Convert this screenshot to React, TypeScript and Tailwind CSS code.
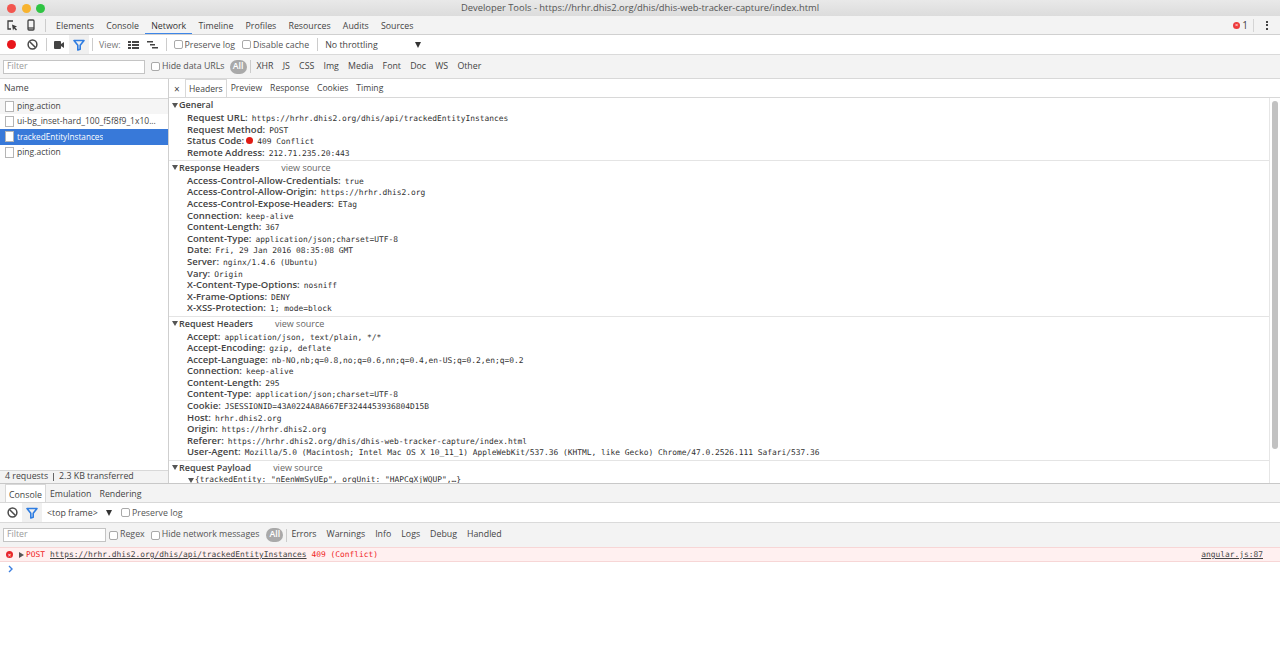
import React from 'react';

const sans = 'font-["Open_Sans","Noto_Sans",sans-serif]';
const mono = 'font-["DejaVu_Sans_Mono","Liberation_Mono",monospace]';

const general: [string, string][] = [
  ['Request URL:', 'https://hrhr.dhis2.org/dhis/api/trackedEntityInstances'],
  ['Request Method:', 'POST'],
  ['Status Code:', '409 Conflict'],
  ['Remote Address:', '212.71.235.20:443'],
];

const responseHeaders: [string, string][] = [
  ['Access-Control-Allow-Credentials:', 'true'],
  ['Access-Control-Allow-Origin:', 'https://hrhr.dhis2.org'],
  ['Access-Control-Expose-Headers:', 'ETag'],
  ['Connection:', 'keep-alive'],
  ['Content-Length:', '367'],
  ['Content-Type:', 'application/json;charset=UTF-8'],
  ['Date:', 'Fri, 29 Jan 2016 08:35:08 GMT'],
  ['Server:', 'nginx/1.4.6 (Ubuntu)'],
  ['Vary:', 'Origin'],
  ['X-Content-Type-Options:', 'nosniff'],
  ['X-Frame-Options:', 'DENY'],
  ['X-XSS-Protection:', '1; mode=block'],
];

const requestHeaders: [string, string][] = [
  ['Accept:', 'application/json, text/plain, */*'],
  ['Accept-Encoding:', 'gzip, deflate'],
  ['Accept-Language:', 'nb-NO,nb;q=0.8,no;q=0.6,nn;q=0.4,en-US;q=0.2,en;q=0.2'],
  ['Connection:', 'keep-alive'],
  ['Content-Length:', '295'],
  ['Content-Type:', 'application/json;charset=UTF-8'],
  ['Cookie:', 'JSESSIONID=43A0224A8A667EF3244453936804D15B'],
  ['Host:', 'hrhr.dhis2.org'],
  ['Origin:', 'https://hrhr.dhis2.org'],
  ['Referer:', 'https://hrhr.dhis2.org/dhis/dhis-web-tracker-capture/index.html'],
  ['User-Agent:', 'Mozilla/5.0 (Macintosh; Intel Mac OS X 10_11_1) AppleWebKit/537.36 (KHTML, like Gecko) Chrome/47.0.2526.111 Safari/537.36'],
];

function Filter({ color = '#2f7de1' }: { color?: string }) {
  return (
    <svg width="12" height="12" viewBox="0 0 12 12" fill="none" stroke={color} strokeWidth="1.6">
      <path d="M1 1.5h10L7.2 6.2v4L4.8 11V6.2z" strokeLinejoin="round" />
    </svg>
  );
}

function Clear() {
  return (
    <svg width="11" height="11" viewBox="0 0 11 11" fill="none" stroke="#4a4a4a" strokeWidth="1.5">
      <circle cx="5.5" cy="5.5" r="4.4" />
      <path d="M2.5 2.5l6 6" />
    </svg>
  );
}

function Check({ label, className = '', labelClass = '' }: { label: string; className?: string; labelClass?: string }) {
  return (
    <span className={`flex items-center gap-[2px] text-[#555] ${className}`}>
      <span className="h-[9px] w-[9px] rounded-[2px] border border-[#a9a9a9] bg-white" />
      <span className={labelClass}>{label}</span>
    </span>
  );
}

function Caret() {
  return <span className="mr-[1px] h-0 w-0 border-x-[3px] border-t-[5px] border-x-transparent border-t-[#555]" />;
}

function Row({ name, value, dot }: { name: string; value: string; dot?: boolean }) {
  return (
    <div className="flex h-[11.6px] items-baseline whitespace-nowrap pl-[18px] text-[9.5px] leading-[11.6px]">
      <span className="font-semibold text-[#444]">{name}</span>
      {dot && <span className="ml-[2px] h-[7px] w-[7px] self-center rounded-full bg-[#e01b14]" />}
      <span className={`${mono} ml-[4px] text-[7.9px] text-[#303030]`}>{value}</span>
    </div>
  );
}

function Section({ title, source, rows, last }: { title: string; source?: boolean; rows: [string, string][]; last?: boolean }) {
  return (
    <section className={last ? '' : 'border-b border-[#e4e4e4] pb-[1.5px]'}>
      <div className="flex h-[14px] items-center pl-[3px] text-[9px] font-semibold text-[#444]">
        <Caret />
        {title}
        {source && <span className="ml-[22px] font-normal text-[#666]">view source</span>}
      </div>
      {rows.map((r, i) => (
        <Row key={i} name={r[0]} value={r[1]} dot={r[0] === 'Status Code:'} />
      ))}
    </section>
  );
}

function Request({ name, selected, shaded }: { name: string; selected?: boolean; shaded?: boolean }) {
  return (
    <div className={`flex h-[15.2px] items-center gap-[2px] pl-[5px] ${selected ? 'bg-[#3879d9] text-[8.2px] font-medium text-white' : shaded ? 'bg-[#f5f5f5] text-[8.5px] text-[#444]' : 'text-[8.5px] text-[#444]'}`}>
      <span className="h-[11px] w-[9px] border border-[#b5b5b5] bg-white" />
      <span className="ml-[1px] truncate">{name}</span>
    </div>
  );
}

export default function App() {
  return (
    <div className={`${sans} flex h-[656px] w-[1280px] flex-col overflow-hidden bg-white text-[8.8px] text-[#444]`}>
      {/* window title */}
      <div className="relative flex h-[16px] shrink-0 items-center justify-center bg-gradient-to-b from-[#e9e9e9] to-[#dcdcdc] text-[9.4px] text-[#555]">
        <div className="absolute left-[7px] top-[4px] flex gap-[5.5px]">
          <span className="h-[9px] w-[9px] rounded-full bg-[#f2564f]" />
          <span className="h-[9px] w-[9px] rounded-full bg-[#f7b32f]" />
          <span className="h-[9px] w-[9px] rounded-full bg-[#2fc443]" />
        </div>
        Developer Tools - https://hrhr.dhis2.org/dhis/dhis-web-tracker-capture/index.html
      </div>

      {/* panel tabs */}
      <div className="flex h-[19px] shrink-0 items-center border-b border-[#d0d0d0] bg-[#f3f3f3]">
        <svg className="ml-[7px]" width="11" height="11" viewBox="0 0 11 11" fill="none" stroke="#3c3c3c" strokeWidth="1.3">
          <path d="M6 1H1v8h3" />
          <path d="M5 4.5l5 2-2 1 2 2-1 1-2-2-1 2z" fill="#3c3c3c" stroke="none" />
        </svg>
        <svg className="ml-[9px]" width="8" height="12" viewBox="0 0 8 12" fill="none" stroke="#444" strokeWidth="1.3">
          <rect x="1" y="1" width="6" height="10" rx="1" />
          <path d="M1 9h6" />
        </svg>
        <span className="ml-[10px] mr-[4px] h-[13px] w-px bg-[#ccc]" />
        <div className="flex h-full items-center">
          {['Elements', 'Console', 'Network', 'Timeline', 'Profiles', 'Resources', 'Audits', 'Sources'].map((t) => (
            <span key={t} className={`flex h-full items-center px-[6.1px] pt-[4px] ${t === 'Network' ? 'border-b border-[#3d86e8] text-[#333]' : ''}`}>{t}</span>
          ))}
        </div>
        <div className="ml-auto flex items-center">
          <span className="flex h-[7px] w-[7px] items-center justify-center rounded-full bg-[#ee3a3a] text-[6px] leading-none text-white">×</span>
          <span className="ml-[2px] text-[10px]">1</span>
          <span className="ml-[5px] h-[13px] w-px bg-[#d5d5d5]" />
          <span className="mx-[12px] flex flex-col gap-[1.5px]">
            <i className="h-[2px] w-[2px] bg-[#444]" />
            <i className="h-[2px] w-[2px] bg-[#444]" />
            <i className="h-[2px] w-[2px] bg-[#444]" />
          </span>
        </div>
      </div>

      {/* network toolbar */}
      <div className="flex h-[20px] shrink-0 items-center border-b border-[#dadada] bg-white">
        <span className="ml-[7px] h-[9px] w-[9px] rounded-full bg-[#e8161b]" />
        <span className="ml-[11px]"><Clear /></span>
        <span className="ml-[8px] mr-[1px] h-[13px] w-px bg-[#ccc]" />
        <svg className="ml-[6px]" width="10" height="8" viewBox="0 0 10 8" fill="#444">
          <rect width="7" height="8" rx="1" />
          <path d="M7 3l3-2v6L7 5z" />
        </svg>
        <span className="ml-[5px] flex h-[19px] w-[20px] items-center justify-center bg-[#f0f0f0]"><Filter /></span>
        <span className="ml-[3px] h-[13px] w-px bg-[#ccc]" />
        <span className="ml-[6px] pt-[3px] text-[#777]">View:</span>
        <svg className="ml-[7px]" width="11" height="8" viewBox="0 0 11 8" fill="#444">
          <path d="M0 0h3v2H0zM4 0h7v2H4zM0 3h3v2H0zM4 3h7v2H4zM0 6h3v2H0zM4 6h7v2H4z" />
        </svg>
        <svg className="ml-[8px]" width="11" height="8" viewBox="0 0 11 8" fill="#444">
          <path d="M0 0h6v1.5H0zM3 3h5v1.5H3zM5 6h6v1.5H5z" />
        </svg>
        <span className="ml-[8px] mr-[7px] h-[13px] w-px bg-[#ccc]" />
        <Check label="Preserve log" labelClass="pt-[3px]" />
        <Check label="Disable cache" className="ml-[7px]" labelClass="pt-[3px]" />
        <span className="ml-[8px] h-[13px] w-px bg-[#ccc]" />
        <span className="ml-[7px] w-[90px] pt-[3px] text-[#444]">No throttling</span>
        <span className="h-0 w-0 border-x-[3.5px] border-t-[6px] border-x-transparent border-t-[#333]" />
      </div>

      {/* filter bar */}
      <div className="flex h-[24px] shrink-0 items-center border-b border-[#d8d8d8] bg-[#f3f3f3]">
        <span className="ml-[3px] flex h-[14px] w-[142px] items-center border border-[#c4c4c4] bg-white pl-[3px] text-[#9a9a9a]">Filter</span>
        <Check label="Hide data URLs" className="ml-[6px]" />
        <span className="ml-[5px] flex h-[14px] w-[17px] items-center justify-center rounded-[7px] bg-[#a9a9a9] font-semibold text-white">All</span>
        <span className="ml-[3px] h-[13px] w-px bg-[#ccc]" />
        <div className="ml-[6px] flex gap-[9.2px] text-[#444]">
          {['XHR', 'JS', 'CSS', 'Img', 'Media', 'Font', 'Doc', 'WS', 'Other'].map((t) => <span key={t}>{t}</span>)}
        </div>
      </div>

      {/* main split */}
      <div className="flex h-[405px] shrink-0 border-b border-[#c8c8c8]">
        <div className="flex w-[169px] shrink-0 flex-col border-r border-[#cfcfcf]">
          <div className="flex h-[20px] shrink-0 items-center border-b border-[#d8d8d8] pl-[4px]">Name</div>
          <Request name="ping.action" shaded />
          <Request name="ui-bg_inset-hard_100_f5f8f9_1x10..." />
          <Request name="trackedEntityInstances" selected />
          <Request name="ping.action" />
          <div className="mt-auto flex h-[13px] items-center border-t border-[#d8d8d8] bg-[#f3f3f3] pl-[5px]">
            4 requests
            <span className="mx-[5px] h-[8px] w-px bg-[#666]" />
            2.3 KB transferred
          </div>
        </div>

        <div className="flex min-w-0 flex-1 flex-col">
          <div className="flex h-[19px] shrink-0 items-end border-b border-[#d8d8d8] text-[8.6px]">
            <span className="mb-[3px] ml-[5px] w-[11px] text-[10px] leading-none">×</span>
            <span className="flex h-[18px] items-center border-x border-t border-[#d8d8d8] bg-white px-[3px] pt-[2px]">Headers</span>
            <div className="mb-[2px] ml-[4px] flex gap-[8px]">
              {['Preview', 'Response', 'Cookies', 'Timing'].map((t) => <span key={t}>{t}</span>)}
            </div>
          </div>
          <div className="flex min-h-0 flex-1">
            <div className="min-w-0 flex-1 overflow-hidden">
              <Section title="General" rows={general} />
              <Section title="Response Headers" source rows={responseHeaders} />
              <Section title="Request Headers" source rows={requestHeaders} />
              <Section title="Request Payload" source rows={[]} last />
              <div className={`${mono} flex h-[11px] items-center pl-[19px] text-[7.9px] text-[#303030]`}>
                <Caret />
                {'{trackedEntity: "nEenWmSyUEp", orgUnit: "HAPCqXjWQUP",…}'}
              </div>
            </div>
            <div className="w-[11px] shrink-0 border-l border-[#e6e6e6] bg-white pl-[2px] pt-[3px]">
              <div className="h-[348px] w-[6px] rounded-[3px] bg-[#c2c2c2]" />
            </div>
          </div>
        </div>
      </div>

      {/* drawer */}
      <div className="flex h-[19px] shrink-0 items-end border-b border-[#d8d8d8] bg-[#f3f3f3] pl-[5px]">
        <span className="flex h-[18px] items-center border-x border-t border-[#d8d8d8] bg-white px-[3px] pt-[4px]">Console</span>
        <span className="ml-[4px] flex h-[18px] items-center pt-[4px]">Emulation</span>
        <span className="ml-[8px] flex h-[18px] items-center pt-[4px]">Rendering</span>
      </div>
      <div className="flex h-[20px] shrink-0 items-center border-b border-[#dadada] bg-white">
        <span className="ml-[7px]"><Clear /></span>
        <span className="ml-[4px] flex h-[19px] w-[20px] items-center justify-center bg-[#f0f0f0]"><Filter /></span>
        <span className="ml-[5px] w-[59px] pt-[3px]">&lt;top frame&gt;</span>
        <span className="h-0 w-0 border-x-[3.5px] border-t-[6px] border-x-transparent border-t-[#333]" />
        <Check label="Preserve log" className="ml-[9px]" labelClass="pt-[3px]" />
      </div>
      <div className="flex h-[24px] shrink-0 items-center bg-[#f3f3f3]">
        <span className="ml-[3px] flex h-[14px] w-[103px] items-center border border-[#c4c4c4] bg-white pl-[3px] text-[#9a9a9a]">Filter</span>
        <Check label="Regex" className="ml-[3px]" />
        <Check label="Hide network messages" className="ml-[6px]" />
        <span className="ml-[7px] flex h-[14px] w-[17px] items-center justify-center rounded-[7px] bg-[#a9a9a9] font-semibold text-white">All</span>
        <span className="ml-[3px] h-[13px] w-px bg-[#ccc]" />
        <div className="ml-[4px] -mt-[1px] flex gap-[10px]">
          {['Errors', 'Warnings', 'Info', 'Logs', 'Debug', 'Handled'].map((t) => <span key={t}>{t}</span>)}
        </div>
      </div>
      <div className={`${mono} flex h-[15px] shrink-0 items-center border-y border-[#f7d6d6] bg-[#fff0f0] text-[7.9px] text-[#f01d1d]`}>
        <span className="ml-[6px] flex h-[7px] w-[7px] items-center justify-center rounded-full bg-[#e8252b] text-[6px] leading-none text-white">×</span>
        <span className="ml-[6px] h-0 w-0 border-y-[3px] border-l-[5px] border-y-transparent border-l-[#555]" />
        <span className="ml-[2px]">POST</span>
        <span className="ml-[5px] text-[#444] underline">https://hrhr.dhis2.org/dhis/api/trackedEntityInstances</span>
        <span className="ml-[5px]">409 (Conflict)</span>
        <span className="ml-auto mr-[17px] text-[#444] underline">angular.js:87</span>
      </div>
      <div className="flex h-[14px] shrink-0 items-center pl-[8px]">
        <svg width="6" height="8" viewBox="0 0 6 8" fill="none" stroke="#3d7fe0" strokeWidth="1.4"><path d="M1 1l3 3-3 3" /></svg>
      </div>
    </div>
  );
}
